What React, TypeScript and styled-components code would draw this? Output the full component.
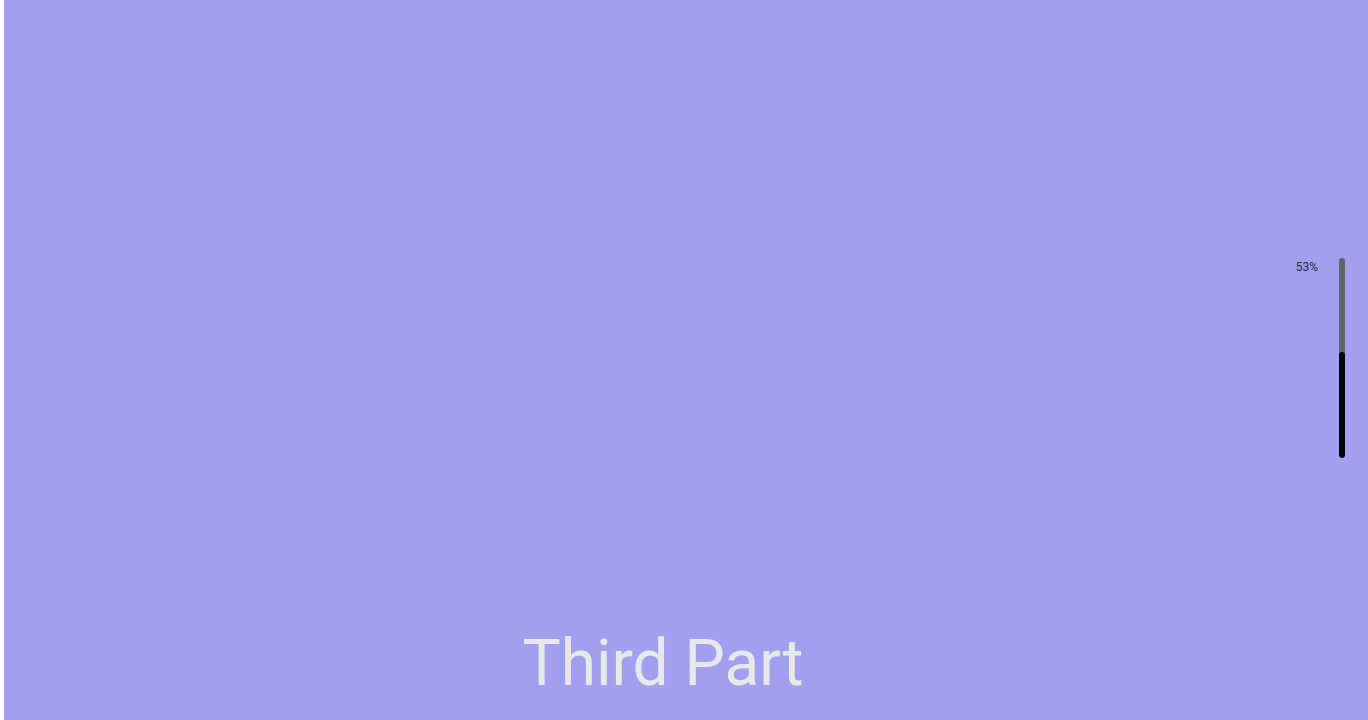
import React from "react";
import styled, { createGlobalStyle } from "styled-components";

const GlobalStyle = createGlobalStyle`
  html, body {
    margin: 0;
    padding: 0;
    background: #ffffff;
    font-family: Roboto, "Liberation Sans", sans-serif;
  }
  * { box-sizing: border-box; }
`;

const Page = styled.main`
  position: relative;
  margin-left: 4px;
  height: 720px;
  overflow: hidden;
  background: #a19ff0;
  display: flex;
  flex-direction: column;
  justify-content: flex-end;
  padding: 0 46px 24px 0;
`;

const Title = styled.h1`
  margin: 0;
  font-family: Roboto, "Liberation Sans", sans-serif;
  font-weight: 400;
  font-size: 64px;
  line-height: 64px;
  color: #e8e8e8;
  text-align: center;
`;

const Indicator = styled.div`
  position: absolute;
  top: 258px;
  right: 23px;
  display: flex;
  align-items: flex-start;
  gap: 21px;
`;

const Label = styled.span`
  margin-top: 3px;
  font-family: Roboto, "Liberation Sans", sans-serif;
  font-size: 12px;
  line-height: 12px;
  color: #2a2a3a;
`;

const Track = styled.div`
  width: 6px;
  height: 200px;
  border-radius: 3px;
  background: #636363;
  display: flex;
  flex-direction: column;
  justify-content: flex-end;
  overflow: hidden;
`;

const Fill = styled.div`
  width: 100%;
  background: #000000;
  border-radius: 3px;
`;

export default function App() {
  const progress = 53;
  return (
    <>
      <GlobalStyle />
      <Page>
        <Title>Third Part</Title>
        <Indicator>
          <Label>{progress}%</Label>
          <Track>
            <Fill style={{ height: `${progress}%` }} />
          </Track>
        </Indicator>
      </Page>
    </>
  );
}
